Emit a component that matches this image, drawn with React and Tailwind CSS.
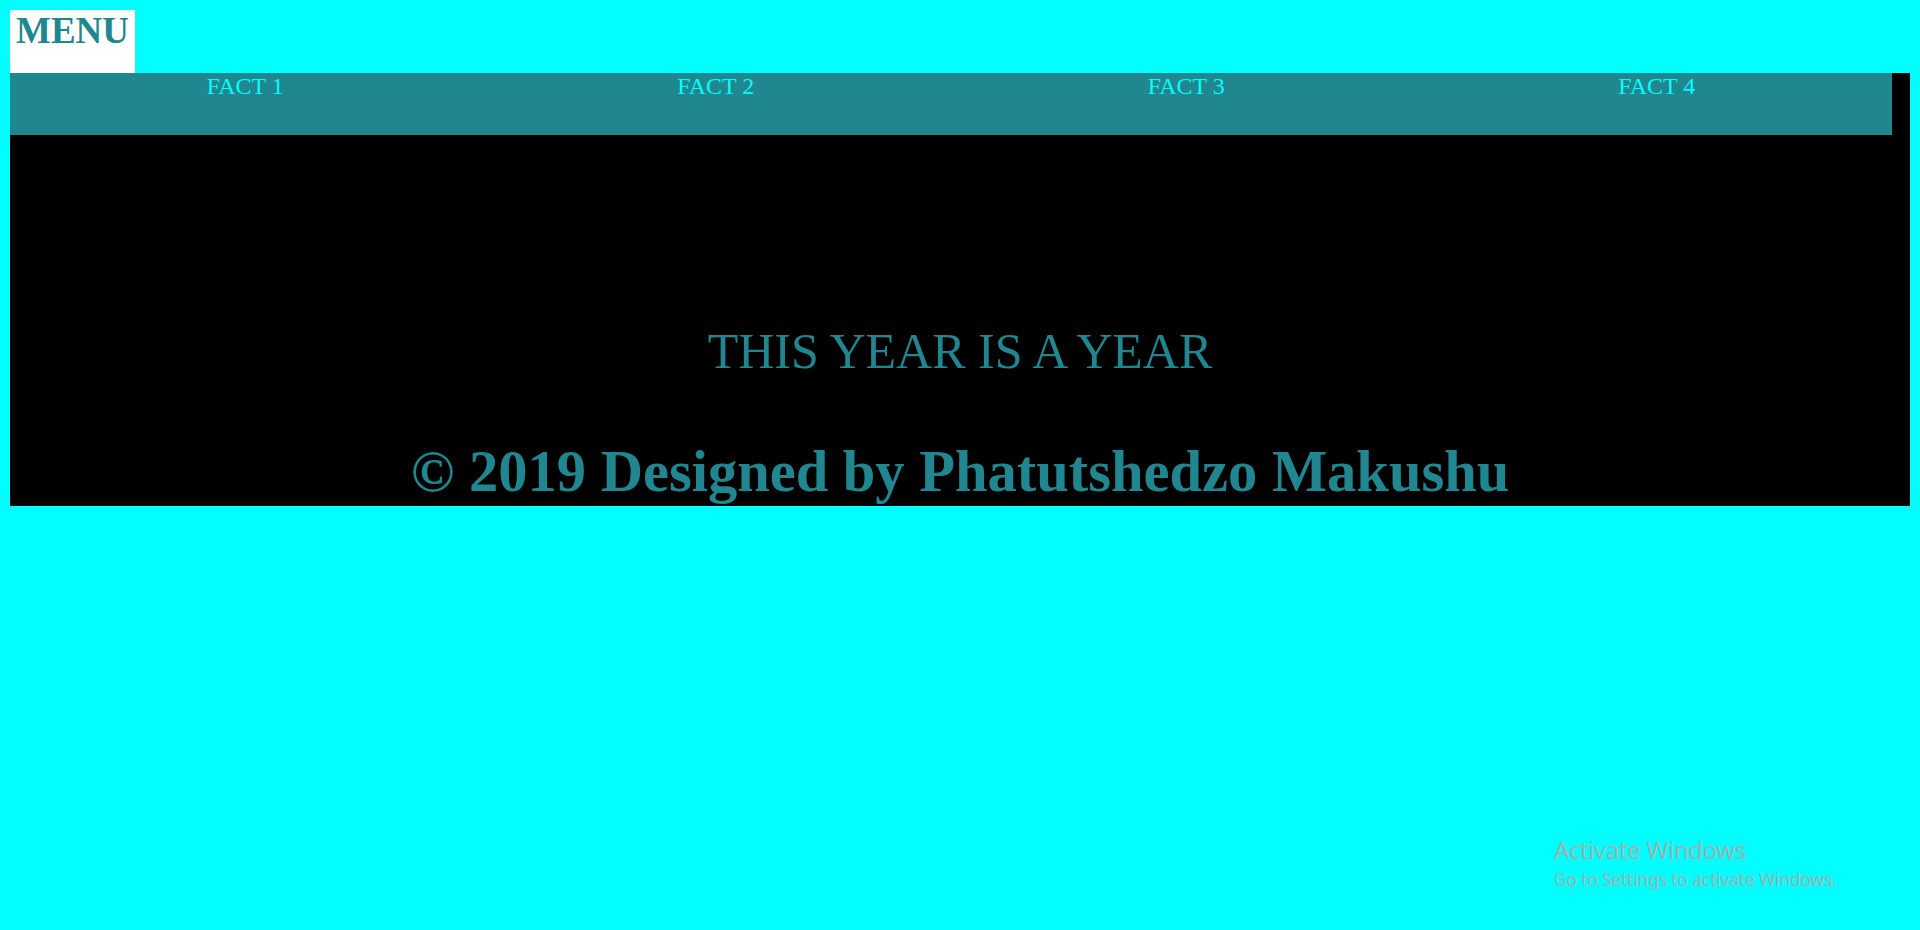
import React from 'react';

const facts = ['FACT 1', 'FACT 2', 'FACT 3', 'FACT 4'];

export default function App() {
  return (
    <div className="relative min-h-[930px] bg-[#00ffff] p-[10px] font-['Liberation_Serif','Times_New_Roman',serif]">
      {/* Menu button */}
      <div className="w-[125px] h-[63px] bg-white pl-[6px]">
        <span className="text-[37px] leading-[42px] font-bold text-[#208690]">MENU</span>
      </div>

      {/* Main block */}
      <div className="bg-black pb-[1px]">
        <div className="grid grid-cols-4 w-[1882px] h-[62px] bg-[#208690]">
          {facts.map((f) => (
            <div key={f} className="text-center text-[24px] leading-[27px] text-[#00ffff]">
              {f}
            </div>
          ))}
        </div>

        <p className="mt-[186px] text-center text-[50px] leading-[60px] text-[#208690]">
          THIS YEAR IS A YEAR
        </p>

        <p className="mt-[58px] text-center text-[58.5px] leading-[66px] font-bold text-[#208690]">
          © 2019 Designed by Phatutshedzo Makushu
        </p>
      </div>

      {/* Windows watermark */}
      <div className="absolute left-[1554px] top-[836px] font-['Noto_Sans',sans-serif] text-[#a0b0b0]">
        <div className="text-[24px] leading-[28px] tracking-[-0.4px]">Activate Windows</div>
        <div className="mt-[3px] text-[17.5px] leading-[24px] tracking-[-0.2px]">Go to Settings to activate Windows.</div>
      </div>
    </div>
  );
}
